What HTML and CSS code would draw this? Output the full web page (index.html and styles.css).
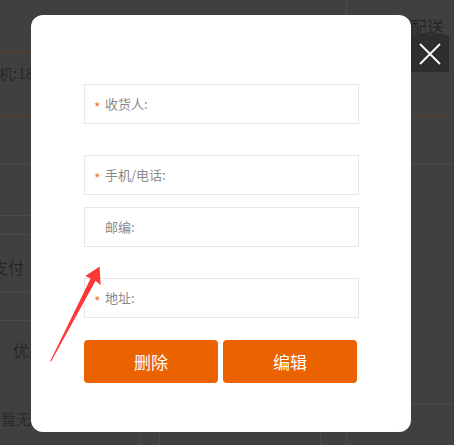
FILE: index.html
```html
<!DOCTYPE html>
<html lang="zh-CN">
<head>
<meta charset="utf-8">
<title>收货地址</title>
<link rel="stylesheet" href="styles.css">
</head>
<body>
<div class="page">
  <header class="hd">
    <div class="hd-left"></div>
    <div class="hd-right">配送</div>
  </header>
  <section class="addr"><span class="addr-text">手机: 18812345678</span></section>
  <div class="blk blk-1"></div>
  <div class="blk blk-2"></div>
  <div class="blk blk-3"></div>
  <div class="blk pay"><span class="pay-text">支付</span></div>
  <div class="blk blk-4"></div>
  <div class="promo"><span class="promo-text">优惠</span></div>
  <div class="promo-line"></div>
  <div class="table">
    <div class="cell c1">暂无订单</div>
    <div class="cell c2"></div>
    <div class="cell c3"></div>
    <div class="cell c4"></div>
    <div class="cell c5"></div>
  </div>
</div>

<div class="overlay">
  <div class="modal">
    <button class="close" type="button" aria-label="关闭">
      <svg width="22" height="22" viewBox="0 0 22 22"><path d="M1 1 L21 21 M21 1 L1 21" stroke="#fff" stroke-width="1.8" fill="none"/></svg>
    </button>
    <div class="field f1"><span class="star">*</span><span class="label">收货人:</span></div>
    <div class="field f2"><span class="star">*</span><span class="label">手机/电话:</span></div>
    <div class="field f3"><span class="star"></span><span class="label">邮编:</span></div>
    <div class="field f4"><span class="star">*</span><span class="label">地址:</span></div>
    <div class="actions">
      <button class="btn" type="button">删除</button>
      <button class="btn" type="button">编辑</button>
    </div>
  </div>
  <svg class="arrow" width="454" height="445" viewBox="0 0 454 445">
    <polygon points="99.6,266.4 100.6,285.2 95.6,280.8 51,361.8 50.2,361.2 90.6,278.4 85.4,276" fill="#fd3636"/>
  </svg>
</div>
</body>
</html>
```
FILE: styles.css
```css
* { box-sizing: border-box; }
html, body { margin: 0; padding: 0; }
body {
  width: 454px;
  height: 445px;
  overflow: hidden;
  background: #404040;
  font-family: "Noto Sans CJK SC", "Noto Sans", sans-serif;
  color: #262626;
}
.page { width: 454px; }

.hd { display: flex; height: 52px; }
.hd-left { width: 347px; border-right: 1px solid #4a4a4a; }
.hd-right { padding-left: 63px; padding-top: 16px; font-size: 17px; line-height: 22px; color: #262626; white-space: nowrap; }

.addr {
  border-top: 1px solid #5e3c20;
  border-bottom: 1px solid #5e3c20;
  height: 64px;
  padding-top: 10px;
  font-size: 14px;
  line-height: 20px;
  white-space: nowrap;
}
.addr-text { display: inline-block; margin-left: -15px; word-spacing: -2px; }

.blk { border-bottom: 1px solid #4a4a4a; }
.blk-1 { height: 49px; }
.blk-2 { height: 51px; width: 360px; }
.blk-3 { height: 19px; width: 360px; }
.pay { height: 58px; width: 360px; padding-top: 22px; font-size: 16px; line-height: 20px; }
.pay-text { display: inline-block; margin-left: -8px; }
.blk-4 { height: 28px; width: 360px; }
.promo { height: 82px; padding: 19px 0 0 13px; font-size: 16px; line-height: 20px; }
.promo-line { height: 1px; margin-left: 40px; background: #4a4a4a; }

.table { display: flex; height: 41px; }
.cell { border-right: 1px solid #4a4a4a; height: 41px; }
.c1 { width: 140px; padding: 5px 0 0 1px; font-size: 15px; line-height: 20px; color: #2b2b2b; white-space: nowrap; overflow: hidden; }
.c2 { width: 20px; }
.c3 { width: 161px; }
.c4 { width: 26px; }
.c5 { flex: 1; border-right: 0; }

.overlay {
  position: fixed;
  inset: 0;
  padding: 15px 0 0 31px;
}
.modal {
  position: relative;
  width: 380px;
  background: #fff;
  border-radius: 12px;
  padding: 69px 52px 49px 53px;
}
.close {
  position: absolute;
  left: 380px;
  top: 20px;
  width: 38px;
  height: 37px;
  border: 0;
  padding: 0;
  background: #2e2e2e;
  display: flex;
  align-items: center;
  justify-content: center;
}
.close svg { display: block; }

.field {
  height: 40px;
  border: 1px solid #e6e6e6;
  display: flex;
  align-items: center;
  padding-left: 9px;
  font-size: 13px;
  color: #8a8a8a;
}
.f2 { margin-top: 31px; }
.f3 { margin-top: 12px; }
.f4 { margin-top: 31px; }
.star { width: 11px; color: #f07a2a; font-size: 14px; margin-top: 5px; line-height: 14px; }
.label { line-height: 18px; }

.actions { display: flex; gap: 5px; margin-top: 22px; }
.btn {
  width: 134px;
  height: 43px;
  border: 0;
  border-radius: 4px;
  background: #eb6200;
  color: #fff;
  font-family: "Noto Sans CJK SC", sans-serif;
  font-size: 17px;
  padding: 0;
}

.arrow { position: absolute; left: 0; top: 0; pointer-events: none; }
```
